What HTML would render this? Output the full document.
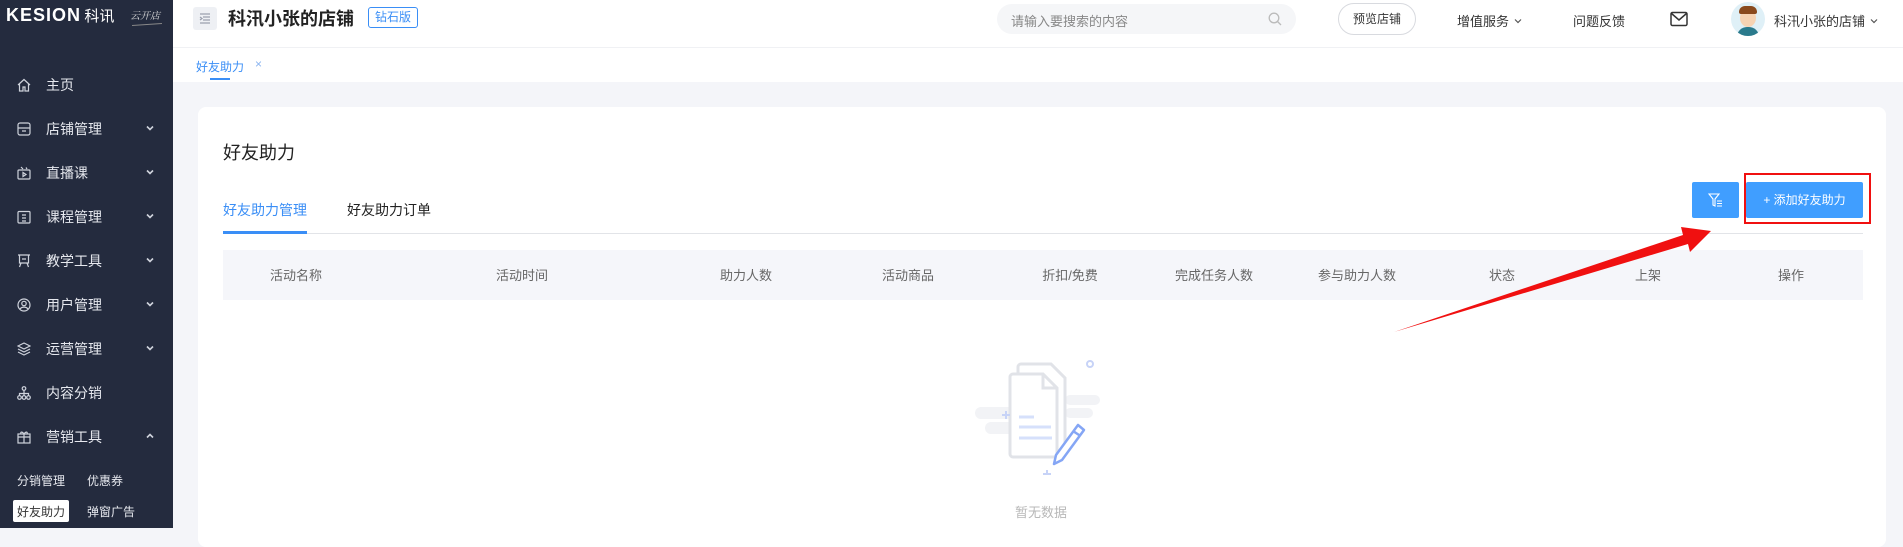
<!DOCTYPE html>
<html><head><meta charset="utf-8"><style>
*{margin:0;padding:0;box-sizing:border-box}
body{width:1903px;height:528px;overflow:hidden;background:#f4f5f9;font-family:"Liberation Sans","Noto Sans CJK SC",sans-serif;position:relative}
.abs{position:absolute}
#side{left:0;top:0;width:173px;height:528px;background:#242b3e;color:#e6e8ee}
.mi{position:absolute;left:0;width:173px;height:20px;font-size:14px;line-height:20px}
.mi .t{position:absolute;left:46px}
.mi svg.ic{position:absolute;left:17px;top:3px}
.mi .ch{position:absolute;left:145px;top:4px}
#hdr{left:173px;top:0;width:1730px;height:48px;background:#fff}
#tabs{left:173px;top:48px;width:1730px;height:34px;background:#fff}
#card{left:198px;top:107px;width:1688px;height:440px;background:#fff;border-radius:8px}
.th{position:absolute;top:268px;font-size:13px;color:#666;line-height:16px;transform:translateX(-50%);white-space:nowrap}
</style></head><body>
<div id="side" class="abs">
 <div class="abs" style="left:6px;top:5px;font-size:18px;font-weight:bold;color:#fff;letter-spacing:1px;font-family:'Liberation Sans',sans-serif">KESION<span style="font-family:'Noto Sans CJK SC';font-weight:normal;font-size:15px;letter-spacing:0"> 科讯</span></div>
 <div class="abs" style="left:130px;top:7px;font-size:10px;color:#ddd;font-style:italic;font-family:'Noto Serif CJK SC',serif">云开店</div>
 <div class="abs" style="left:132px;top:24px;width:30px;height:1px;background:#888;transform:rotate(-4deg)"></div>
 <div class="mi" style="top:75px"><svg class="ic" width="14" height="14" viewBox="0 0 14 14" fill="none" stroke="#cfd3dc" stroke-width="1.2"><path d="M1 7L7 1.5 13 7M2.5 6v7h3.5V9h2v4h3.5V6"/></svg><span class="t">主页</span></div>
 <div class="mi" style="top:119px"><svg class="ic" width="14" height="14" viewBox="0 0 14 14" fill="none" stroke="#cfd3dc" stroke-width="1.2"><rect x="1" y="1" width="12" height="12" rx="2"/><path d="M1 6h12M5 9h4"/></svg><span class="t">店铺管理</span><svg class="ch" width="10" height="10" viewBox="0 0 10 10"><path d="M2 3.5l3 3 3-3" stroke="#cfd3dc" stroke-width="1.6" fill="none"/></svg></div>
 <div class="mi" style="top:163px"><svg class="ic" width="14" height="14" viewBox="0 0 14 14" fill="none" stroke="#cfd3dc" stroke-width="1.2"><rect x="1" y="4" width="12" height="9" rx="1"/><path d="M6 6.5v4l3-2z M4 1l2 2M9 1.5l1 1.5"/></svg><span class="t">直播课</span><svg class="ch" width="10" height="10" viewBox="0 0 10 10"><path d="M2 3.5l3 3 3-3" stroke="#cfd3dc" stroke-width="1.6" fill="none"/></svg></div>
 <div class="mi" style="top:207px"><svg class="ic" width="14" height="14" viewBox="0 0 14 14" fill="none" stroke="#cfd3dc" stroke-width="1.2"><rect x="1" y="1.5" width="12" height="11.5" rx="1"/><path d="M5 5h4M5 8h4M5 11h4"/></svg><span class="t">课程管理</span><svg class="ch" width="10" height="10" viewBox="0 0 10 10"><path d="M2 3.5l3 3 3-3" stroke="#cfd3dc" stroke-width="1.6" fill="none"/></svg></div>
 <div class="mi" style="top:251px"><svg class="ic" width="14" height="14" viewBox="0 0 14 14" fill="none" stroke="#cfd3dc" stroke-width="1.2"><path d="M1 1h12M2.5 1v8h9V1M4 9l-1.5 4M10 9l1.5 4M5 5h4"/></svg><span class="t">教学工具</span><svg class="ch" width="10" height="10" viewBox="0 0 10 10"><path d="M2 3.5l3 3 3-3" stroke="#cfd3dc" stroke-width="1.6" fill="none"/></svg></div>
 <div class="mi" style="top:295px"><svg class="ic" width="14" height="14" viewBox="0 0 14 14" fill="none" stroke="#cfd3dc" stroke-width="1.2"><circle cx="7" cy="7" r="6"/><circle cx="7" cy="5.5" r="2.2"/><path d="M3 11c2-2.5 6-2.5 8 0"/></svg><span class="t">用户管理</span><svg class="ch" width="10" height="10" viewBox="0 0 10 10"><path d="M2 3.5l3 3 3-3" stroke="#cfd3dc" stroke-width="1.6" fill="none"/></svg></div>
 <div class="mi" style="top:339px"><svg class="ic" width="14" height="14" viewBox="0 0 14 14" fill="none" stroke="#cfd3dc" stroke-width="1.2"><path d="M7 1l6 3-6 3-6-3z M1 7l6 3 6-3 M1 10l6 3 6-3"/></svg><span class="t">运营管理</span><svg class="ch" width="10" height="10" viewBox="0 0 10 10"><path d="M2 3.5l3 3 3-3" stroke="#cfd3dc" stroke-width="1.6" fill="none"/></svg></div>
 <div class="mi" style="top:383px"><svg class="ic" width="14" height="14" viewBox="0 0 14 14" fill="none" stroke="#cfd3dc" stroke-width="1.2"><circle cx="7" cy="2.5" r="1.8"/><circle cx="2.5" cy="11.5" r="1.8"/><circle cx="7" cy="11.5" r="1.8"/><circle cx="11.5" cy="11.5" r="1.8"/><path d="M7 4.3v5.4M2.5 9.7V7.5h9v2.2"/></svg><span class="t">内容分销</span></div>
 <div class="mi" style="top:427px"><svg class="ic" width="14" height="14" viewBox="0 0 14 14" fill="none" stroke="#cfd3dc" stroke-width="1.2"><rect x="1" y="4" width="12" height="9"/><path d="M1 7h12M7 4v9M7 4C5 1 3 2 4 4M7 4c2-3 4-2 3 0"/></svg><span class="t">营销工具</span><svg class="ch" width="10" height="10" viewBox="0 0 10 10"><path d="M2 6.5l3-3 3 3" stroke="#cfd3dc" stroke-width="1.6" fill="none"/></svg></div>
 <div class="abs" style="left:17px;top:472px;font-size:12px;color:#e6e8ee">分销管理</div>
 <div class="abs" style="left:87px;top:472px;font-size:12px;color:#e6e8ee">优惠券</div>
 <div class="abs" style="left:13px;top:500px;width:56px;height:22px;background:#fff;border-radius:2px"></div>
 <div class="abs" style="left:17px;top:503px;font-size:12px;color:#333">好友助力</div>
 <div class="abs" style="left:87px;top:503px;font-size:12px;color:#e6e8ee">弹窗广告</div>
</div>

<div id="hdr" class="abs">
 <div class="abs" style="left:20px;top:7px;width:24px;height:23px;background:#eef0f4;border-radius:3px"><svg width="24" height="23" viewBox="0 0 24 23"><path d="M7 7h10M10 10h7M10 13h7M7 16h10M7 10l2 1.5-2 1.5" stroke="#9aa0ad" stroke-width="1.2" fill="none"/></svg></div>
 <div class="abs" style="left:55px;top:8px;font-size:18px;font-weight:bold;color:#222;line-height:22px">科汛小张的店铺</div>
 <div class="abs" style="left:195px;top:7px;width:50px;height:21px;border:1px solid #3a8ef6;border-radius:3px;color:#3a8ef6;font-size:12px;line-height:19px;text-align:center">钻石版</div>
 <div class="abs" style="left:824px;top:4px;width:299px;height:30px;background:#f5f6f8;border-radius:15px"><span class="abs" style="left:14px;top:7px;font-size:13px;color:#888">请输入要搜索的内容</span><svg class="abs" style="left:271px;top:8px" width="14" height="14" viewBox="0 0 14 14" fill="none" stroke="#bbb" stroke-width="1.3"><circle cx="6" cy="6" r="4.8"/><path d="M9.5 9.5L13 13"/></svg></div>
 <div class="abs" style="left:1165px;top:3px;width:78px;height:32px;border:1px solid #d8dadf;border-radius:16px;font-size:12px;color:#333;text-align:center;line-height:30px">预览店铺</div>
 <div class="abs" style="left:1284px;top:11px;font-size:13px;color:#333">增值服务 <svg width="10" height="10" viewBox="0 0 10 10"><path d="M2 3.5l3 3 3-3" stroke="#555" stroke-width="1.2" fill="none"/></svg></div>
 <div class="abs" style="left:1400px;top:11px;font-size:13px;color:#333">问题反馈</div>
 <svg class="abs" style="left:1497px;top:11px" width="18" height="16" viewBox="0 0 18 16" fill="none" stroke="#333" stroke-width="1.5"><rect x="1" y="1.5" width="16" height="13" rx="1.5"/><path d="M1.5 2.5L9 9l7.5-6.5"/></svg>
 <div class="abs" style="left:1558px;top:2px;width:34px;height:34px;border-radius:50%;background:#dff0f7;overflow:hidden"><div class="abs" style="left:9px;top:7px;width:16px;height:18px;background:#f6d3b3;border-radius:50%"></div><div class="abs" style="left:8px;top:4px;width:18px;height:8px;background:#8a4a1e;border-radius:9px 9px 3px 3px"></div><div class="abs" style="left:6px;top:25px;width:22px;height:12px;background:#2a7a8c;border-radius:10px 10px 0 0"></div></div>
 <div class="abs" style="left:1601px;top:11px;font-size:13px;color:#333">科汛小张的店铺 <svg width="10" height="10" viewBox="0 0 10 10"><path d="M2 3.5l3 3 3-3" stroke="#555" stroke-width="1.2" fill="none"/></svg></div>
</div>
<div class="abs" style="left:173px;top:47px;width:1730px;height:1px;background:#f0f1f4"></div>
<div id="tabs" class="abs">
 <div class="abs" style="left:23px;top:10px;font-size:12px;color:#3a8ef6">好友助力</div>
 <div class="abs" style="left:82px;top:9px;font-size:12px;color:#8ab4f0">×</div>
 <div class="abs" style="left:37px;top:30px;width:20px;height:2px;background:#3a8ef6"></div>
</div>

<div id="card" class="abs"></div>
<div class="abs" style="left:223px;top:141px;font-size:18px;color:#222;line-height:24px">好友助力</div>
<div class="abs" style="left:223px;top:201px;font-size:14px;color:#3a8ef6;line-height:18px">好友助力管理</div>
<div class="abs" style="left:347px;top:201px;font-size:14px;color:#222;line-height:18px">好友助力订单</div>
<div class="abs" style="left:223px;top:233px;width:1640px;height:1px;background:#e2e4e8"></div>
<div class="abs" style="left:223px;top:231px;width:84px;height:3px;background:#3a8ef6"></div>

<div class="abs" style="left:1692px;top:182px;width:47px;height:36px;background:#409eff;border-radius:2px"><svg class="abs" style="left:16px;top:11px" width="16" height="15" viewBox="0 0 16 15" fill="none" stroke="#fff" stroke-width="1.1"><path d="M1 1h10L7 6v7L5 12V6z M9 8h5M9 10.5h5M9 13h5"/></svg></div>
<div class="abs" style="left:1746px;top:182px;width:117px;height:36px;background:#409eff;border-radius:2px;color:#fff;font-size:12px;line-height:36px;text-align:center">+ 添加好友助力</div>
<div class="abs" style="left:1744px;top:173px;width:127px;height:51px;border:2.5px solid #f01010"></div>

<div class="abs" style="left:223px;top:250px;width:1640px;height:50px;background:#f5f6fa"></div>
<div class="th" style="left:296px">活动名称</div>
<div class="th" style="left:522px">活动时间</div>
<div class="th" style="left:746px">助力人数</div>
<div class="th" style="left:908px">活动商品</div>
<div class="th" style="left:1070px">折扣/免费</div>
<div class="th" style="left:1214px">完成任务人数</div>
<div class="th" style="left:1357px">参与助力人数</div>
<div class="th" style="left:1502px">状态</div>
<div class="th" style="left:1648px">上架</div>
<div class="th" style="left:1791px">操作</div>

<svg class="abs" style="left:0;top:0" width="1903" height="528">
 <path d="M1394 332 L1683 235 L1681 227 L1711 231 L1690 252 L1688 244 Z" fill="#f01010"/>
</svg>

<svg class="abs" style="left:975px;top:355px" width="130" height="120" viewBox="0 0 130 120">
 <rect x="0" y="52" width="40" height="12" rx="6" fill="#f2f3f6"/>
 <rect x="10" y="67" width="30" height="12" rx="6" fill="#f2f3f6"/>
 <rect x="90" y="40" width="35" height="10" rx="5" fill="#f2f3f6"/>
 <rect x="90" y="53" width="28" height="10" rx="5" fill="#f2f3f6"/>
 <path d="M43 18V12a3 3 0 0 1 3-3h30l14 14v65" fill="none" stroke="#e1e3e8" stroke-width="3"/>
 <path d="M35 22a3 3 0 0 1 3-3h30l14 14v66a3 3 0 0 1-3 3H38a3 3 0 0 1-3-3z" fill="#fff" stroke="#e1e3e8" stroke-width="3"/>
 <path d="M68 19v14h14" fill="none" stroke="#e1e3e8" stroke-width="3"/>
 <path d="M44 62h15M44 72h32M44 83h33" stroke="#d6e0fb" stroke-width="3"/>
 <circle cx="115" cy="9" r="3" fill="none" stroke="#c7d3f7" stroke-width="2"/>
 <path d="M31 56v8M27 60h8M72 115v8M68 119h8" stroke="#c7d3f7" stroke-width="2"/>
 <path d="M103 70l-22 30-2 9 8-4 22-30z M98 76l6 4" fill="#fff" stroke="#85a6f5" stroke-width="2.5" stroke-linejoin="round"/>
</svg>
<div class="abs" style="left:1015px;top:502px;font-size:13px;color:#b8b8b8">暂无数据</div>
</body></html>
